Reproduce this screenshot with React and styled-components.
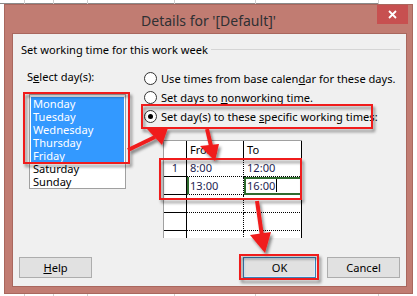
import React from "react"
import styled, { createGlobalStyle } from "styled-components"

const GlobalStyle = createGlobalStyle`
  html, body {
    margin: 0;
    padding: 0;
    background: #fff;
  }
  body {
    font-family: "Noto Sans", "Liberation Sans", sans-serif;
    font-size: 11.1px;
    color: #000;
  }
`

const Sheet = styled.div`
  position: relative;
  width: 417px;
  height: 296px;
  overflow: hidden;
  background-color: #fff;
  background-image: linear-gradient(#cfcfcf, #cfcfcf), linear-gradient(#cfcfcf, #cfcfcf),
    linear-gradient(#cfcfcf, #cfcfcf), linear-gradient(#cfcfcf, #cfcfcf),
    linear-gradient(#cfcfcf, #cfcfcf), linear-gradient(#cfcfcf, #cfcfcf),
    linear-gradient(#8a8a8a, #8a8a8a);
  background-size: 1px 100%, 1px 100%, 1px 100%, 1px 100%, 1px 100%, 1px 100%, 378px 1px;
  background-position: 24px 0, 53px 0, 87px 0, 174px 0, 255px 0, 378px 0, 0 3px;
  background-repeat: no-repeat;
`

const Dialog = styled.div`
  box-sizing: border-box;
  margin: 4px 0 0 4px;
  width: 409px;
  height: 290px;
  display: flex;
  flex-direction: column;
  padding: 0 5px 6px 7px;
  background: #c17c72;
  border: 1px solid #a9675e;
`

const TitleBar = styled.div`
  display: grid;
  grid-template-columns: 1fr auto 1fr;
  align-items: center;
  height: 28px;
  margin: 0 -5px 0 -7px;
`

const Title = styled.div`
  grid-column: 2;
  font-size: 14px;
  color: #2f3033;
  padding-top: 2px;
`

const Close = styled.div`
  grid-column: 3;
  justify-self: end;
  align-self: start;
  width: 31px;
  height: 19px;
  margin-right: 4px;
  background: #c75050;
  display: flex;
  align-items: center;
  justify-content: center;
`

const Panel = styled.div`
  flex: 1;
  display: flex;
  flex-direction: column;
  background: #f0f0f0;
  border: 1px solid #a9675e;
`

const Heading = styled.div`
  display: flex;
  align-items: center;
  gap: 3px;
  height: 16px;
  margin: 7px 6px 0 8px;
  white-space: nowrap;
`

const Rule = styled.div`
  flex: 1;
  height: 1px;
  background: #d5d5d5;
`

const Body = styled.div`
  display: flex;
  margin-top: 12px;
`

const LeftCol = styled.div`
  flex: 0 0 117px;
  margin-left: 14px;
  display: flex;
  flex-direction: column;
`

const Label = styled.div`
  height: 16px;
  line-height: 16px;
  white-space: nowrap;
`

const ListBox = styled.div`
  box-sizing: border-box;
  width: 97px;
  height: 95px;
  margin: 9px 0 0 2px;
  padding: 2px 1px 0;
  background: #fff;
  border: 1px solid #a0a0a0;
`

const Item = styled.div`
  height: 13px;
  line-height: 13px;
  padding-left: 2px;
  background: ${(p) => (p.$selected ? "#3399ff" : "transparent")};
  color: ${(p) => (p.$selected ? "#fff" : "#000")};
`

const RightCol = styled.div`
  flex: 0 0 auto;
  display: flex;
  flex-direction: column;
`

const RadioRow = styled.div`
  display: flex;
  align-items: center;
  gap: 4px;
  height: 19px;
  white-space: nowrap;
`

const Radio = styled.span`
  box-sizing: border-box;
  width: 13px;
  height: 13px;
  border-radius: 50%;
  border: 1px solid #333;
  background: #fff;
  display: flex;
  align-items: center;
  justify-content: center;
  &::after {
    content: "";
    width: 5px;
    height: 5px;
    border-radius: 50%;
    background: ${(p) => (p.$checked ? "#000" : "transparent")};
  }
`

const Grid = styled.div`
  display: grid;
  grid-template-columns: 23px 57px 58px;
  grid-auto-rows: 18px;
  width: 139px;
  height: 98px;
  margin: 14px 0 0 19px;
  overflow: hidden;
  background: #fff;
  border-top: 1px solid #a0a0a0;
  border-left: 1px solid #a0a0a0;
  box-sizing: border-box;
`

const Cell = styled.div`
  box-sizing: border-box;
  display: flex;
  align-items: center;
  justify-content: ${(p) => (p.$center ? "center" : "flex-start")};
  padding-left: ${(p) => (p.$center ? "0" : p.$mark ? "1px" : "3px")};
  color: ${(p) => (p.$head ? "#000" : "#1e1e52")};
  border-right: 1px ${(p) => (p.$dotted ? "dotted" : "solid")} #000;
  border-bottom: 1px ${(p) => (p.$head || p.$rowHead ? "solid" : "dotted")}
    ${(p) => (p.$head ? "#fff" : "#000")};
  border-left: ${(p) => (p.$mark ? "2px solid #2f6b2f" : "0")};
  ${(p) => p.$active && "outline: 2px solid #2f6b2f; outline-offset: -2px;"}
`

const Caret = styled.span`
  display: inline-block;
  width: 1px;
  height: 13px;
  background: #000;
  margin-left: 1px;
`

const Buttons = styled.div`
  display: flex;
  gap: 11px;
  margin: auto 6px 8px 6px;
`

const Button = styled.div`
  box-sizing: border-box;
  width: 73px;
  height: 21px;
  display: flex;
  align-items: center;
  justify-content: center;
  background: #e1e1e1;
  border: 1px solid ${(p) => (p.$default ? "#3c7fb1" : "#adadad")};
  box-shadow: ${(p) => (p.$default ? "inset 0 0 0 1px #dcecfc" : "none")};
  margin-left: ${(p) => (p.$push ? "auto" : "0")};
`

const Overlay = styled.svg`
  position: absolute;
  left: 0;
  top: 0;
  pointer-events: none;
`

const days = ["Monday", "Tuesday", "Wednesday", "Thursday", "Friday", "Saturday", "Sunday"]

function Arrow({ from, to, head }) {
  return (
    <g>
      <line x1={from[0]} y1={from[1]} x2={to[0]} y2={to[1]} stroke="#f01c1c" strokeWidth="4" />
      <polygon points={head} fill="#f01c1c" />
    </g>
  )
}

export default function App() {
  return (
    <Sheet>
      <GlobalStyle />
      <Dialog>
        <TitleBar>
          <Title>Details for '[Default]'</Title>
          <Close>
            <svg width="9" height="9" viewBox="0 0 9 9">
              <path d="M1 1 L8 8 M8 1 L1 8" stroke="#fff" strokeWidth="1.8" />
            </svg>
          </Close>
        </TitleBar>
        <Panel>
          <Heading>
            Set working time for this work week
            <Rule />
          </Heading>
          <Body>
            <LeftCol>
              <Label>
                S<u>e</u>lect day(s):
              </Label>
              <ListBox>
                {days.map((d, i) => (
                  <Item key={d} $selected={i < 5}>
                    {d}
                  </Item>
                ))}
              </ListBox>
            </LeftCol>
            <RightCol>
              <RadioRow>
                <Radio />
                <span>
                  Use times from base calen<u>d</u>ar for these days.
                </span>
              </RadioRow>
              <RadioRow>
                <Radio />
                <span>
                  Set days to <u>n</u>onworking time.
                </span>
              </RadioRow>
              <RadioRow>
                <Radio $checked />
                <span>
                  Set day(s) to these <u>s</u>pecific working times:
                </span>
              </RadioRow>
              <Grid>
                <Cell $head />
                <Cell $head>From</Cell>
                <Cell $head>To</Cell>

                <Cell $rowHead $center>1</Cell>
                <Cell $dotted>8:00</Cell>
                <Cell>12:00</Cell>

                <Cell $rowHead />
                <Cell $dotted $mark>13:00</Cell>
                <Cell $active>
                  16:00
                  <Caret />
                </Cell>

                <Cell $rowHead />
                <Cell $dotted />
                <Cell />

                <Cell $rowHead />
                <Cell $dotted />
                <Cell />

                <Cell $rowHead />
                <Cell $dotted />
                <Cell />
              </Grid>
            </RightCol>
          </Body>
          <Buttons>
            <Button>
              <span>
                <u>H</u>elp
              </span>
            </Button>
            <Button $default $push>
              OK
            </Button>
            <Button>Cancel</Button>
          </Buttons>
        </Panel>
      </Dialog>

      <Overlay width="417" height="296" viewBox="0 0 417 296">
        <defs>
          <filter id="sh" x="-20%" y="-20%" width="140%" height="140%">
            <feDropShadow dx="2" dy="3" stdDeviation="1.8" floodColor="#000" floodOpacity="0.45" />
          </filter>
        </defs>
        <g filter="url(#sh)" fill="none">
          <rect x="24" y="93" width="105" height="70" stroke="#f01c1c" strokeWidth="2" />
          <rect x="142" y="105" width="230" height="23" stroke="#f01c1c" strokeWidth="2" />
          <rect x="160" y="159" width="141" height="40" stroke="#f01c1c" strokeWidth="2" />
          <rect x="240" y="255" width="78" height="24" stroke="#f01c1c" strokeWidth="2" />
          <Arrow from={[128, 150]} to={[155, 137]} head="147,129 168,128 162,145" />
          <Arrow from={[207, 129]} to={[211, 146]} head="200,146 219,144 215,161" />
          <Arrow from={[257, 201]} to={[262, 236]} head="250,235 271,232 265,253" />
        </g>
      </Overlay>
    </Sheet>
  )
}
